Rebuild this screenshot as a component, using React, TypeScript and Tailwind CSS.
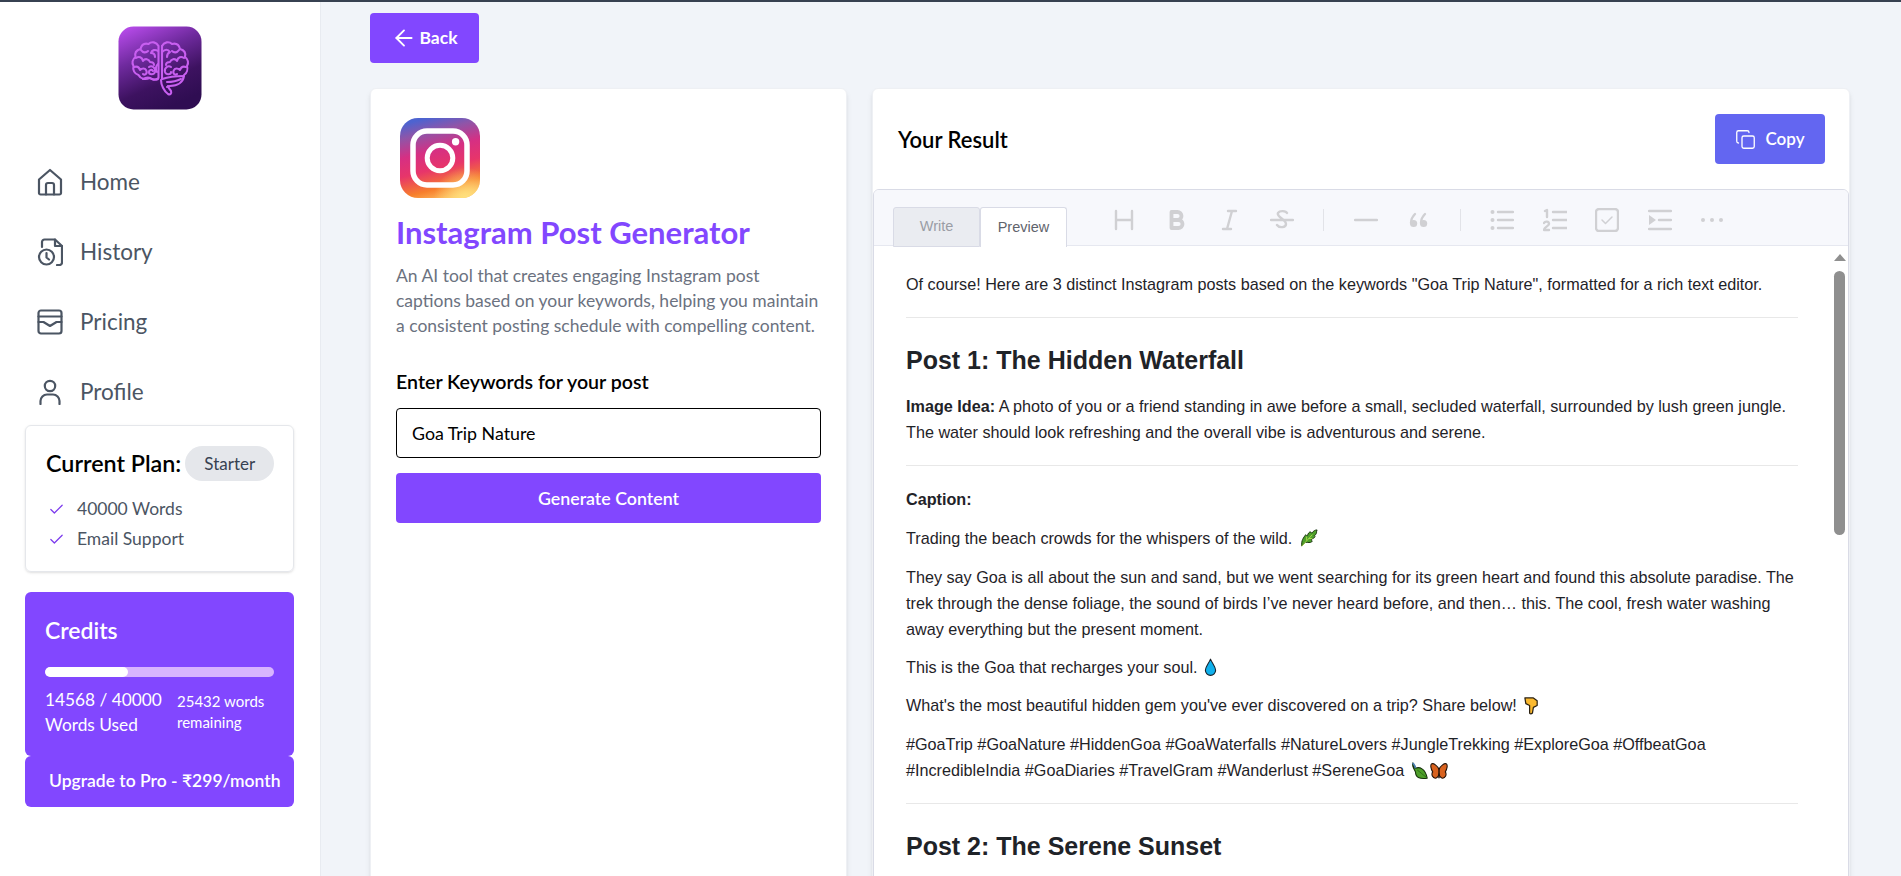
import { ArrowLeft, Check, Copy } from "lucide-react";

const purple = "bg-[#8247ff]";

function BrainLogo() {
  return (
    <svg viewBox="0 0 84 84" className="w-[84px] h-[84px] shrink-0">
      <defs>
        <linearGradient id="logoBase" x1="0.1" y1="0" x2="0.55" y2="1">
          <stop offset="0" stopColor="#b84ceb" />
          <stop offset="0.38" stopColor="#6f2a9e" />
          <stop offset="0.72" stopColor="#3d1260" />
          <stop offset="1" stopColor="#2f0d52" />
        </linearGradient>
      </defs>
      <rect x="0.5" y="0.5" width="83" height="83" rx="15" fill="url(#logoBase)" />
      <g fill="none" stroke="#c85ff0" strokeWidth="2.1" strokeLinecap="round" strokeLinejoin="round">
        <path d="M40.500 20c-2-4-7-5-10-2-4-1-7 1-8 5-4 1-6 4-5 8-3 2-4 6-2 9-1 4 1 8 5 9 2 4 7 5 11 3 3 2 6 2 9 0z" />
        <path d="M44 20c2-4 7-5 10-2 4-1 7 1 8 5 4 1 6 4 5 8 3 2 4 6 2 9 1 3 0 7-3 9" />
        <path d="M44 20v33" />
        <path d="M40 25c-3-2-6-1-7 2 3 0 4 2 4 4M23 24c2 3 5 3 7 1M18 32c3-2 6-1 7 3 2-3 6-2 7 1 2 0 4 1 4 3" />
        <path d="M16 41c3-1 5 0 6 3 2-2 5-2 6 0 2 3-1 6-3 4" />
        <path d="M31 41c3-2 7 1 6 5-1 3-6 3-6 0 0-2 3-3 4-1" />
        <path d="M40 38c-2 2-3 5-1 8M25 53c3-2 7-2 9 0 2 1 4 1 6 0" />
        <path d="M44 26c3-3 6-3 8 0-2 1-3 3-3 5M61 24c-2 3-5 3-7 1M66 32c-3-2-6-1-7 3-2-3-6-2-7 1-2 0-4 1-4 3" />
        <path d="M68 41c-3-1-5 0-6 3-2-2-5-2-6 0-2 3 1 6 3 4" />
        <path d="M53 41c-3-2-7 1-6 5 1 3 6 3 6 0" />
        <path d="M44 53c6-2 15-3 22-3-1 6-6 10-14 10l-3 1" />
        <path d="M49 56c5 0 10-1 14-3" />
        <path d="M43 54c0 5 3 11 7 14 2 1 4 0 3-3-1-2-3-3-3-5" />
      </g>
    </svg>
  );
}

function InstagramLogo() {
  return (
    <svg viewBox="0 0 80 80" className="w-20 h-20 ml-[4px] block">
      <defs>
        <linearGradient id="igBase" x1="0.35" y1="0" x2="0.6" y2="1">
          <stop offset="0" stopColor="#4d63d0" />
          <stop offset="0.17" stopColor="#8f55a8" />
          <stop offset="0.4" stopColor="#d62f83" />
          <stop offset="0.62" stopColor="#e7356a" />
          <stop offset="0.86" stopColor="#f77f2c" />
          <stop offset="1" stopColor="#fdb65a" />
        </linearGradient>
        <radialGradient id="igGlow" cx="0.82" cy="1.02" r="0.4">
          <stop offset="0" stopColor="#ffe480" />
          <stop offset="1" stopColor="#ffe480" stopOpacity="0" />
        </radialGradient>
      </defs>
      <rect width="80" height="80" rx="18" fill="url(#igBase)" />
      <rect width="80" height="80" rx="18" fill="url(#igGlow)" />
      <rect x="13" y="13" width="54" height="54" rx="14" fill="none" stroke="#fff" strokeWidth="5.5" />
      <circle cx="40" cy="40" r="12.8" fill="none" stroke="#fff" strokeWidth="5" />
      <circle cx="55.6" cy="23.8" r="3.7" fill="#fff" />
    </svg>
  );
}

function HomeIcon() {
  return (
    <svg viewBox="0 0 26 28" fill="none" stroke="#4b5563" strokeWidth="2.2" strokeLinejoin="round" strokeLinecap="round" className="w-[26px] h-[28px]">
      <path d="M2 11.500 13 2l11 9.500V25a1.500 1.500 0 0 1-1.500 1.500h-19A1.500 1.500 0 0 1 2 25z" />
      <path d="M9 26.500V17a2 2 0 0 1 2-2h4a2 2 0 0 1 2 2v9.500" />
    </svg>
  );
}

function HistoryIcon() {
  return (
    <svg viewBox="0 0 26 28" fill="none" stroke="#4b5563" strokeWidth="2.2" strokeLinejoin="round" strokeLinecap="round" className="w-[26px] h-[28px]">
      <path d="M5 9V4a2.500 2.500 0 0 1 2.500-2.500H18L25 8v16.500a2.500 2.500 0 0 1-2.500 2.500H20" />
      <path d="M18 1.500V8h7" />
      <circle cx="9.500" cy="19" r="7.500" />
      <path d="M9.500 15v4.500l2.500 2" />
    </svg>
  );
}

function PricingIcon() {
  return (
    <svg viewBox="0 0 26 26" fill="none" stroke="#4b5563" strokeWidth="2.2" strokeLinejoin="round" strokeLinecap="round" className="w-[26px] h-[26px]">
      <rect x="1.500" y="1.500" width="23" height="23" rx="2.500" />
      <path d="M1.500 7.500h23" />
      <path d="M1.500 13h5l6.500 4 6.500-4h5" />
    </svg>
  );
}

function ProfileIcon() {
  return (
    <svg viewBox="0 0 26 26" fill="none" stroke="#4b5563" strokeWidth="2.2" strokeLinecap="round" className="w-[26px] h-[26px]">
      <circle cx="13" cy="7" r="5.200" />
      <path d="M3.500 25v-3a6.500 6.500 0 0 1 6.500-6.500h6a6.500 6.500 0 0 1 6.500 6.500v3" />
    </svg>
  );
}

function NavItem({ icon, label }: { icon: React.ReactNode; label: string }) {
  return (
    <div className="h-[70px] flex items-center gap-[17px] pl-[37px]">
      <span className="w-[26px] flex justify-center">{icon}</span>
      <span className="text-[22.500px] text-[#4b5563] font-normal">{label}</span>
    </div>
  );
}

function Sidebar() {
  return (
    <aside className="w-[321px] shrink-0 h-full bg-white border-r border-[#e8ebf1] flex flex-col">
      <div className="flex justify-center pt-[24px] pb-[37px] pr-[1px]">
        <BrainLogo />
      </div>
      <nav className="flex flex-col">
        <NavItem icon={<HomeIcon />} label="Home" />
        <NavItem icon={<HistoryIcon />} label="History" />
        <NavItem icon={<PricingIcon />} label="Pricing" />
        <NavItem icon={<ProfileIcon />} label="Profile" />
      </nav>
      <div className="mx-[25px] w-[269px] -mt-[2px] h-[147px] rounded-md border border-[#e5e7eb] shadow-sm pl-[20px] pt-[20px]">
        <div className="flex items-center gap-[4px]">
          <span className="text-[23.300px] font-semibold text-black whitespace-nowrap">Current Plan:</span>
          <span className="h-[35px] w-[89px] rounded-full bg-[#e5e7eb] flex items-center justify-center text-[17px] text-[#374151]">
            Starter
          </span>
        </div>
        <div className="mt-[13px] flex items-center gap-[12px] pl-[2px] h-[30px] text-[17.500px] text-[#4b5563]">
          <Check className="w-[17px] h-[17px] text-[#7c3aed]" strokeWidth={1.75} />
          40000 Words
        </div>
        <div className="flex items-center gap-[12px] pl-[2px] h-[30px] text-[17.500px] text-[#4b5563]">
          <Check className="w-[17px] h-[17px] text-[#7c3aed]" strokeWidth={1.75} />
          Email Support
        </div>
      </div>
      <div className={`mx-[25px] w-[269px] mt-[20px] h-[164px] rounded-md ${purple} text-white px-[20px] pt-[22px]`}>
        <div className="text-[23px] font-semibold leading-[32px]">Credits</div>
        <div className="mt-[21px] h-[10px] w-[229px] rounded-full bg-[#d8b4fe] overflow-hidden">
          <div className="h-full w-[83px] rounded-full bg-white" />
        </div>
        <div className="mt-[10px] flex justify-between">
          <div className="text-[17.300px] leading-[25px] whitespace-nowrap">
            14568 / 40000
            <br />
            Words Used
          </div>
          <div className="text-[15px] leading-[21px] w-[97px] pt-[4px]">25432 words remaining</div>
        </div>
      </div>
      <div className={`mx-[25px] w-[269px] h-[51px] rounded-md ${purple} text-white flex items-center pl-[24px] text-[17.500px] font-semibold whitespace-nowrap`}>
        Upgrade to Pro - ₹299/month
      </div>
    </aside>
  );
}

function FormCard() {
  return (
    <section className="bg-white rounded-md shadow-md border border-[#eef0f4] h-[900px] px-[25px] pt-[29px]">
      <InstagramLogo />
      <h1 className="mt-[14px] text-[31px] leading-[40px] font-bold text-[#8247ff] whitespace-nowrap">
        Instagram Post Generator
      </h1>
      <p className="mt-[11px] text-[17.500px] leading-[25px] text-[#6b7280]">
        An AI tool that creates engaging Instagram post captions based on your keywords, helping you maintain a consistent posting schedule with compelling content.
      </p>
      <label className="block mt-[30px] text-[19.600px] leading-[28px] font-semibold text-black">
        Enter Keywords for your post
      </label>
      <input
        readOnly
        value="Goa Trip Nature"
        className="mt-[12px] w-full h-[50px] border border-black rounded-sm px-[15px] pb-[1px] text-[17.800px] text-black outline-none"
      />
      <button className={`mt-[15px] w-full h-[50px] rounded-sm ${purple} text-white text-[17.800px] font-semibold`}>
        Generate Content
      </button>
    </section>
  );
}

const toolStroke = "#d0d0d3";

function ToolIcon({ children, w = 24 }: { children: React.ReactNode; w?: number }) {
  return (
    <svg viewBox={`0 0 ${w} 24`} width={w} height={24} fill="none" stroke={toolStroke} strokeWidth="2.4" strokeLinecap="round" strokeLinejoin="round">
      {children}
    </svg>
  );
}

function Toolbar() {
  return (
    <div className="flex items-center h-[24px] ml-[44px] gap-[28.500px] mt-[18px]">
      <ToolIcon><path d="M4 3v18M20 3v18M4 12h16" /></ToolIcon>
      <ToolIcon><path strokeWidth="3.800" d="M6.500 4v16M6.500 4h6a4 4 0 0 1 0 8h-6M6.500 12h7a4 4 0 0 1 0 8h-7" /></ToolIcon>
      <ToolIcon><path d="M11 3h8M6 21h8M15 3 10 21" /></ToolIcon>
      <ToolIcon><path d="M1 12h22M17 5c-1-2-7-3-9 0-2 4 8 6 8 11 0 4-7 4-9 1" /></ToolIcon>
      <div className="w-px h-[22px] bg-[#e2e3e8] mx-[1px]" />
      <ToolIcon><path d="M1 12h22" /></ToolIcon>
      <ToolIcon><path strokeWidth="2.400" d="M9 6c-2 2-4 5-4 9M19 6c-2 2-4 5-4 9" /><circle cx="7.600" cy="15.500" r="3.600" fill={toolStroke} stroke="none" /><circle cx="17.600" cy="15.500" r="3.600" fill={toolStroke} stroke="none" /></ToolIcon>
      <div className="w-px h-[22px] bg-[#e2e3e8] mx-[1px]" />
      <ToolIcon><path d="M8 4h15M8 12h15M8 20h15" /><circle cx="2.500" cy="4" r="2" fill={toolStroke} stroke="none" /><circle cx="2.500" cy="12" r="2" fill={toolStroke} stroke="none" /><circle cx="2.500" cy="20" r="2" fill={toolStroke} stroke="none" /></ToolIcon>
      <ToolIcon><path d="M10 4h14M10 12h14M10 20h14M2 3l2-1v7M1 15c1-2 5-2 5 1 0 2-5 3-5 6h5" /></ToolIcon>
      <ToolIcon><rect x="1" y="1" width="22" height="22" rx="3" /><path strokeWidth="1.500" d="m7 12 3.500 3.500L17 9" /></ToolIcon>
      <ToolIcon><path d="M1 3h22M11 12h12M1 21h22" /><path fill={toolStroke} stroke="none" d="M1 7l7 5-7 5z" /></ToolIcon>
      <ToolIcon><circle cx="3" cy="12" r="2" fill={toolStroke} stroke="none" /><circle cx="12" cy="12" r="2" fill={toolStroke} stroke="none" /><circle cx="21" cy="12" r="2" fill={toolStroke} stroke="none" /></ToolIcon>
    </div>
  );
}

function HerbEmoji() {
  return (
    <svg viewBox="0 0 20 20" className="inline-block w-[19px] h-[19px] align-[-4px] ml-[2px]">
      <path d="M3 18C2 12 5 9 7 6c1 1 1 1 2 1 0-2 2-4 3-4 0 1 1 1 2 1 1-2 3-3 5-3-1 2 0 3-1 4 0 1-2 2-2 2 1 1 1 1 1 1-1 2-3 2-4 3 0 1 1 2 1 2-2 2-5 1-7 1-2 1-3 3-4 4z" fill="#4ea02a" stroke="#15300a" strokeWidth="1" strokeLinejoin="round" />
      <path d="M3 18 14 6M8 12V8M10 10h4" stroke="#a6d84a" strokeWidth="1" fill="none" />
    </svg>
  );
}

function DropEmoji() {
  return (
    <svg viewBox="0 0 14 20" className="inline-block w-[13px] h-[19px] align-[-4px] ml-[2px]">
      <path d="M7 1C5 6 1.500 9 1.500 13a5.500 5.500 0 0 0 11 0C12.500 9 9 6 7 1z" fill="#10b0ec" stroke="#16212b" strokeWidth="1.200" strokeLinejoin="round" />
    </svg>
  );
}

function PointEmoji() {
  return (
    <svg viewBox="0 0 18 20" className="inline-block w-[17px] h-[19px] align-[-4px] ml-[2px]">
      <path d="M2 2h9l4 3v5l-4 2-1 6c-1 1-3 1-3 0V10L3 8z" fill="#fbb92f" stroke="#2a2010" strokeWidth="1.300" strokeLinejoin="round" />
    </svg>
  );
}

function LeafEmoji() {
  return (
    <svg viewBox="0 0 20 20" className="inline-block w-[18px] h-[18px] align-[-4px] ml-[2px]">
      <path d="M2 1c0 3 1 4 3 6 4-2 11 0 13 11-7 1-13 0-13-7C3 7 1 5 2 1z" fill="#4ea02a" stroke="#15300a" strokeWidth="1.200" strokeLinejoin="round" />
      <path d="M2 1c1 2 3 3 3 6" stroke="#4a7fb0" strokeWidth="2" fill="none" />
      <path d="M7 9c3 2 6 5 10 8" stroke="#2d6a14" strokeWidth="1" fill="none" />
    </svg>
  );
}

function ButterflyEmoji() {
  return (
    <svg viewBox="0 0 20 20" className="inline-block w-[18px] h-[18px] align-[-4px] ml-[1px]">
      <path d="M10 8C8 4 4 1 2 2 0 3 1 8 3 11c-2 3 0 7 3 7 2 0 4-3 4-5 0 2 2 5 4 5 3 0 5-4 3-7 2-3 3-8 1-9-2-1-6 2-8 6z" fill="#d9621e" stroke="#231208" strokeWidth="1.200" strokeLinejoin="round" />
      <path d="M10 7v11" stroke="#231208" strokeWidth="1.600" />
    </svg>
  );
}

function ResultCard() {
  return (
    <section className="bg-white rounded-md shadow-md border border-[#eef0f4] h-[900px] flex flex-col">
      <div className="h-[100px] shrink-0 flex items-center justify-between pl-[25px] pr-[24px]">
        <h2 className="text-[22px] font-semibold text-black">Your Result</h2>
        <button className="w-[110px] h-[50px] rounded-sm bg-[#6366f1] text-white flex items-center justify-center gap-[9px] text-[17px] font-semibold">
          <Copy className="w-[21px] h-[21px]" strokeWidth={1.5} />
          Copy
        </button>
      </div>
      <div className="relative flex-1 border border-[#d9dbe6] rounded-t-md overflow-hidden font-['Liberation_Sans',Arial,sans-serif]">
        <div className="relative h-[56px] bg-[#f7f8fc] border-b border-[#e6e8f0] flex">
          <div className="absolute left-[19px] top-[17px] h-[40px] flex text-[14.500px]">
            <div className="w-[87px] bg-[#eaecf1] border border-[#d9dbe6] rounded-t-[3px] flex items-center justify-center text-[#9a9da5]">
              Write
            </div>
            <div className="w-[87px] bg-white border border-b-0 border-[#d9dbe6] rounded-t-[3px] flex items-center justify-center text-[#5f646c] z-10">
              Preview
            </div>
          </div>
          <div className="ml-[194px] flex items-start">
            <Toolbar />
          </div>
        </div>
        <div className="pl-[32px] pr-[50px] pt-[25px] text-[16.200px] leading-[26px] text-[#1f2328] overflow-hidden">
          <p>Of course! Here are 3 distinct Instagram posts based on the keywords "Goa Trip Nature", formatted for a rich text editor.</p>
          <hr className="mt-[20px] border-[#e8e8e8]" />
          <h3 className="text-[25px] leading-[36px] font-bold mt-[24px]">Post 1: The Hidden Waterfall</h3>
          <p className="mt-[15px]"><strong>Image Idea:</strong> A photo of you or a friend standing in awe before a small, secluded waterfall, surrounded by lush green jungle. The water should look refreshing and the overall vibe is adventurous and serene.</p>
          <hr className="mt-[20px] mb-[20px] border-[#e8e8e8]" />
          <p className="font-bold">Caption:</p>
          <p className="mt-[13px]">Trading the beach crowds for the whispers of the wild. <HerbEmoji /></p>
          <p className="mt-[13px]">They say Goa is all about the sun and sand, but we went searching for its green heart and found this absolute paradise. The trek through the dense foliage, the sound of birds I’ve never heard before, and then… this. The cool, fresh water washing away everything but the present moment.</p>
          <p className="mt-[12px]">This is the Goa that recharges your soul. <DropEmoji /></p>
          <p className="mt-[12px]">What's the most beautiful hidden gem you've ever discovered on a trip? Share below! <PointEmoji /></p>
          <p className="mt-[13px]">#GoaTrip #GoaNature #HiddenGoa #GoaWaterfalls #NatureLovers #JungleTrekking #ExploreGoa #OffbeatGoa #IncredibleIndia #GoaDiaries #TravelGram #Wanderlust #SereneGoa <LeafEmoji /><ButterflyEmoji /></p>
          <hr className="mt-[20px] border-[#e8e8e8]" />
          <h3 className="text-[25px] leading-[36px] font-bold mt-[24px]">Post 2: The Serene Sunset</h3>
        </div>
        <div className="absolute right-0 top-[56px] bottom-0 w-[17px] bg-white flex flex-col items-center">
          <div className="mt-[8px] w-0 h-0 border-x-[6.500px] border-x-transparent border-b-[7px] border-b-[#8f8f8f]" />
          <div className="mt-[10px] w-[11px] h-[264px] rounded-full bg-[#8f8f8f]" />
        </div>
      </div>
    </section>
  );
}

export default function App() {
  return (
    <div className="h-screen overflow-hidden border-t-2 border-[#374151] bg-[#f1f4f9] flex font-['Lato','Open_Sans',sans-serif]">
      <Sidebar />
      <main className="flex-1 min-w-0 pl-[49px] pr-[51px] pt-[11px]">
        <button className={`w-[109px] h-[50px] rounded-sm ${purple} text-white flex items-center justify-center gap-[2px] text-[17.500px] font-bold`}>
          <ArrowLeft className="w-[26px] h-[26px]" strokeWidth={1.75} />
          Back
        </button>
        <div className="grid grid-cols-[477px_1fr] gap-[25px] mt-[25px]">
          <FormCard />
          <ResultCard />
        </div>
      </main>
    </div>
  );
}
